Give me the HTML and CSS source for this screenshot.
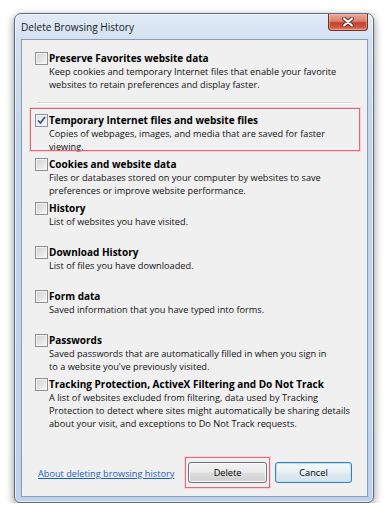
FILE: index.html
```html
<!DOCTYPE html>
<html>
<head>
<meta charset="utf-8">
<title>Delete Browsing History</title>
<link rel="stylesheet" href="styles.css">
</head>
<body>
<div class="window">
  <div class="titlebar">
    <span class="title">Delete Browsing History</span>
    <div class="close">
      <svg width="12" height="10" viewBox="0 0 12 10">
        <path d="M2 1.5 L10 8.5 M10 1.5 L2 8.5" stroke="#5a2a22" stroke-width="4" stroke-linecap="round" fill="none"/>
        <path d="M2 1.5 L10 8.5 M10 1.5 L2 8.5" stroke="#ffffff" stroke-width="2.2" stroke-linecap="round" fill="none"/>
      </svg>
    </div>
  </div>
  <div class="content">
    <div class="item">
      <span class="cb"></span>
      <div class="text">
        <div class="label">Preserve Favorites website data</div>
        <div class="desc">Keep cookies and temporary Internet files that enable your favorite<br>websites to retain preferences and display faster.</div>
      </div>
    </div>
    <div class="sep"></div>
    <div class="item marked">
      <span class="cb checked">
        <svg width="9" height="9" viewBox="0 0 9 9"><path d="M1 4.5 L3.5 7 L8 1" stroke="#3b4c86" stroke-width="1.7" fill="none"/></svg>
      </span>
      <div class="text">
        <div class="label">Temporary Internet files and website files</div>
        <div class="desc">Copies of webpages, images, and media that are saved for faster<br>viewing.</div>
      </div>
    </div>
    <div class="item">
      <span class="cb"></span>
      <div class="text">
        <div class="label">Cookies and website data</div>
        <div class="desc">Files or databases stored on your computer by websites to save<br>preferences or improve website performance.</div>
      </div>
    </div>
    <div class="item">
      <span class="cb"></span>
      <div class="text">
        <div class="label">History</div>
        <div class="desc">List of websites you have visited.</div>
      </div>
    </div>
    <div class="item">
      <span class="cb"></span>
      <div class="text">
        <div class="label">Download History</div>
        <div class="desc">List of files you have downloaded.</div>
      </div>
    </div>
    <div class="item">
      <span class="cb"></span>
      <div class="text">
        <div class="label">Form data</div>
        <div class="desc">Saved information that you have typed into forms.</div>
      </div>
    </div>
    <div class="item">
      <span class="cb"></span>
      <div class="text">
        <div class="label">Passwords</div>
        <div class="desc">Saved passwords that are automatically filled in when you sign in<br>to a website you've previously visited.</div>
      </div>
    </div>
    <div class="item last">
      <span class="cb"></span>
      <div class="text">
        <div class="label">Tracking Protection, ActiveX Filtering and Do Not Track</div>
        <div class="desc">A list of websites excluded from filtering, data used by Tracking<br>Protection to detect where sites might automatically be sharing details<br>about your visit, and exceptions to Do Not Track requests.</div>
      </div>
    </div>
    <div class="footer">
      <a class="link" href="#">About deleting browsing history</a>
      <div class="buttons">
        <div class="mark"><div class="btn delete">Delete</div></div>
        <div class="btn cancel">Cancel</div>
      </div>
    </div>
  </div>
</div>
</body>
</html>
```
FILE: styles.css
```css
html, body {
  margin: 0;
  padding: 0;
  background: #ffffff;
}

body {
  font-family: "Open Sans", "Noto Sans", sans-serif;
  color: #000;
}

.window {
  box-sizing: border-box;
  width: 360px;
  height: 490px;
  margin: 13px 0 0 14px;
  border: 1px solid #59687b;
  border-radius: 7px 7px 6px 6px;
  background: linear-gradient(180deg, #e2ecf7 0px, #d3e0f0 26px, #c3d6ec 120px, #bed2ea 100%);
  box-shadow: 0 3px 9px rgba(0, 0, 0, 0.45), inset 0 0 0 1px rgba(255, 255, 255, 0.65);
  padding: 0 5px 5px 6px;
  display: flex;
  flex-direction: column;
}

.titlebar {
  height: 25px;
  display: flex;
  justify-content: space-between;
  align-items: center;
  flex: none;
}

.title {
  font-size: 10.1px;
  color: #1a1a1a;
  padding-top: 1px;
}

.close {
  box-sizing: border-box;
  align-self: flex-start;
  width: 40px;
  height: 17px;
  border: 1px solid #6e3026;
  border-top: none;
  border-radius: 0 0 4px 4px;
  background: linear-gradient(180deg, #eaa798 0%, #d97f6c 45%, #c5402a 55%, #cf553c 80%, #e0826b 100%);
  box-shadow: inset 0 0 0 1px rgba(255, 210, 200, 0.45);
  display: flex;
  align-items: center;
  justify-content: center;
}

.content {
  flex: 1;
  border: 1px solid #8b9db6;
  background: #f0f0f0;
  padding: 11px 0 0 13px;
  display: flex;
  flex-direction: column;
}

.item {
  display: flex;
  height: 44px;
  flex: none;
}

.item.last {
  height: 53px;
}

.item.marked {
  position: relative;
}

.item.marked::after {
  content: "";
  position: absolute;
  left: -5px;
  top: -5px;
  width: 330px;
  height: 43px;
  box-sizing: border-box;
  border: 1px solid #e2687a;
  box-shadow: 0 0 0 1px rgba(244, 170, 180, 0.45);
}

.cb {
  box-sizing: border-box;
  width: 13px;
  height: 13px;
  margin-top: 1px;
  flex: none;
  border: 1px solid #8f8f8f;
  background: linear-gradient(135deg, #d0d0d0 0%, #e4e4e4 50%, #f8f8f8 100%);
  box-shadow: inset 0 0 0 1px #f4f4f4;
  display: flex;
  align-items: center;
  justify-content: center;
}

.cb.checked {
  border-color: #8a93a8;
  background: linear-gradient(135deg, #dfe3ea 0%, #eef0f4 60%, #fafafa 100%);
}

.text {
  margin-left: 1px;
}

.label {
  font-size: 10px;
  font-weight: 700;
  line-height: 14px;
  white-space: nowrap;
}

.desc {
  font-size: 9.2px;
  line-height: 13px;
  white-space: nowrap;
  color: #111;
}

.sep {
  flex: none;
  width: 314px;
  height: 1px;
  margin: 7px 0 9px 3px;
  background: #d5d5d5;
  border-bottom: 1px solid #ffffff;
}

.footer {
  display: flex;
  align-items: center;
  margin-top: 27px;
  margin-right: 15px;
}

.link {
  margin-left: 3px;
  margin-top: 2px;
  font-size: 9.2px;
  color: #1a5bc4;
  text-decoration: underline;
}

.buttons {
  margin-left: auto;
  display: flex;
  align-items: center;
  gap: 5px;
}

.mark {
  border: 1px solid #e2687a;
  box-shadow: 0 0 0 1px rgba(244, 170, 180, 0.35);
  padding: 4px 2px;
}

.btn {
  box-sizing: border-box;
  height: 21px;
  border: 1px solid #707070;
  border-radius: 3px;
  font-size: 9.2px;
  color: #000;
  display: flex;
  align-items: center;
  justify-content: center;
}

.btn.delete {
  width: 79px;
  background: linear-gradient(180deg, #f2f2f2 0%, #ebebeb 48%, #dddddd 52%, #cfcfcf 100%);
  box-shadow: inset 0 0 0 1px #fafafa;
}

.btn.cancel {
  width: 77px;
  border-color: #3c7fb1;
  background: linear-gradient(180deg, #f3f8fb 0%, #eaf1f6 48%, #dfe9f0 52%, #d7e3ec 100%);
  box-shadow: inset 0 0 0 1px #b9e2f6;
}
```
